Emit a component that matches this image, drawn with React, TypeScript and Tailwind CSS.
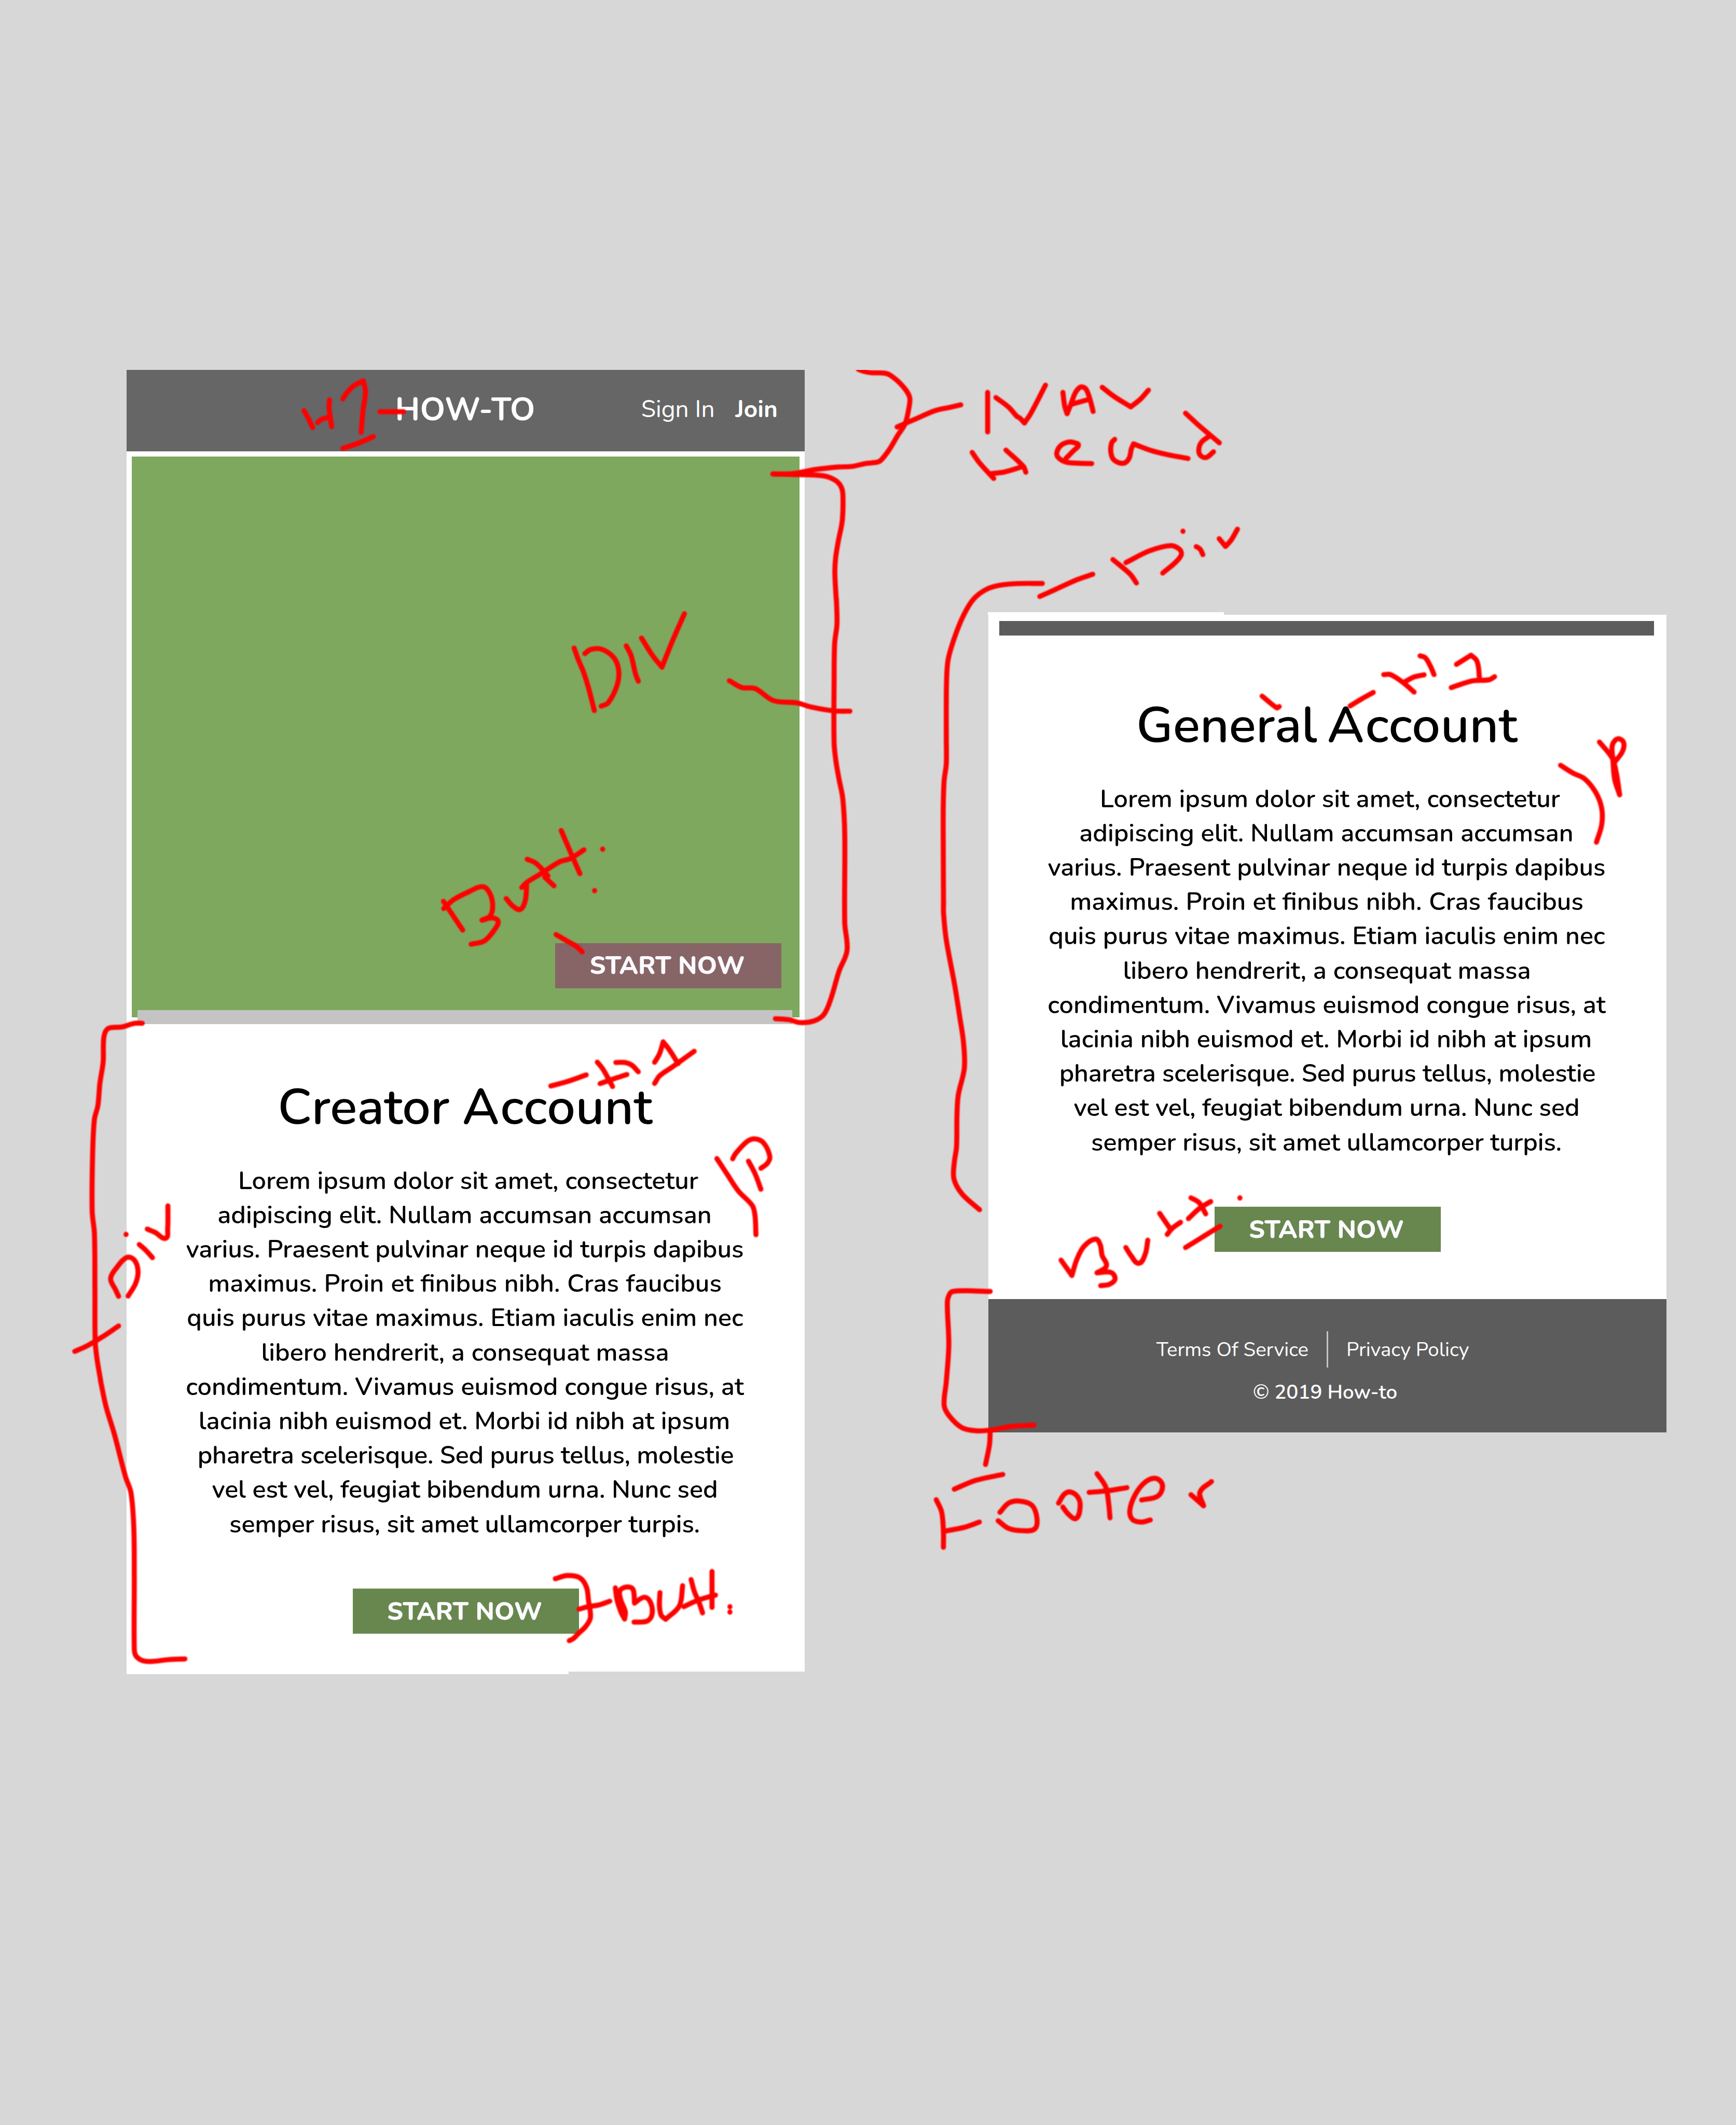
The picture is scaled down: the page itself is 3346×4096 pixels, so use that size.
type StrokeGroup = {
  origin: [number, number];
  scale: [number, number];
  strokes: string[];
};

const INTRO_LINES = [
  { text: 'Lorem ipsum dolor sit amet, consectetur', spacing: 'pl-[10px]' },
  { text: 'adipiscing elit. Nullam accumsan accumsan', spacing: 'pr-[4px]' },
  { text: 'varius. Praesent pulvinar neque id turpis dapibus', spacing: 'pr-[3px] tracking-[0.02px]' },
  { text: 'maximus. Proin et finibus nibh. Cras faucibus', spacing: 'pr-[3px] [word-spacing:0.6px]' },
  { text: 'quis purus vitae maximus. Etiam iaculis enim nec', spacing: 'pr-[2px]' },
  { text: 'libero hendrerit, a consequat massa', spacing: 'pr-[2px]' },
  { text: 'condimentum. Vivamus euismod congue risus, at', spacing: 'pr-[3px] tracking-[0.02px]' },
  { text: 'lacinia nibh euismod et. Morbi id nibh at ipsum', spacing: 'pr-[5px]' },
  { text: 'pharetra scelerisque. Sed purus tellus, molestie', spacing: 'tracking-[-0.27px]' },
  { text: 'vel est vel, feugiat bibendum urna. Nunc sed', spacing: 'pr-[3px] tracking-[-0.09px]' },
  { text: 'semper risus, sit amet ullamcorper turpis.', spacing: 'pr-[4px] tracking-[-0.15px]' },
];

// Pen strokes: every entry is a list of points that the pen passes through.
const PEN_GROUPS: StrokeGroup[] = [
  {
    // "H1" beside the site title
    origin: [600, 820],
    scale: [0.829, 0.3333],
    strokes: [
      '121,378 133,430 145,495',
      '192,303 191,360 198,488',
      '159,460 168,440 188,423',
      '229,297 240,255 260,205 286,172',
      '286,172 292,250 285,380 280,528',
      '332,385 398,385',
      '229,638 270,605 314,557',
    ],
  },
  {
    // header brace and "Nav Head"
    origin: [1900, 820],
    scale: [0.6378, 0.3571],
    strokes: [
      '122,86 142,99 170,108 215,110 238,125 280,190 307,265 303,350 290,440 265,510 235,600 205,670 190,685 150,693 100,712 50,716 -10,727 -50,737 -102,756 -140,761 -187,761',
      '-187,761 -110,765 -50,767 -5,773 20,785 45,810 60,845 66,890 64,1060 50,1190 40,1300 37,1400 42,1570',
      '262,458 330,405 400,352 450,332 492,315',
      '589,235 589,490',
      '619,268 665,330 695,390 705,400 722,432',
      '722,432 745,370 798,188',
      '861,235 867,320 876,372',
      '876,372 890,310 905,240 920,205 932,200 945,215 958,275 970,358',
      '895,310 948,283',
      '1003,202 1045,260 1106,328',
      '1106,328 1140,280 1170,220',
      '533,622 560,690 611,790',
      '655,607 718,712 727,750',
      '605,758 650,748 718,712',
      '872,660 900,610 917,575 900,558 880,556 855,575 840,615 842,650 870,683 920,692 965,694',
      '1048,538 1037,560 1034,620 1045,670 1080,692 1100,660 1108,600 1116,567',
      '1116,567 1180,610 1240,637 1313,661',
      '1304,369 1350,445 1426,560',
      '1390,517 1362,555 1352,600 1357,640 1378,655 1405,618',
    ],
  },
  {
    // hero brace, "DIV" and "Butt."
    origin: [980, 1380],
    scale: [0.6633, 0.6378],
    strokes: [
      '1428,0 1430,90 1422,160 1420,300 1420,520 1427,590 1437,650 1450,720 1457,850 1457,1170 1465,1270 1437,1345 1410,1440 1385,1500 1350,1524 1300,1530 1265,1520 1216,1516',
      '1056,295 1100,320 1145,323 1210,367 1290,375 1340,390 1420,404 1475,405',
      '517,177 530,215 550,265 568,325 587,403',
      '554,197 575,182 612,181 655,212 672,260 665,315 635,375 611,387',
      '698,169 715,205 730,270 740,297',
      '751,141 790,205 822,246',
      '822,246 855,160 900,53',
      '63,1092 130,1196',
      '64,1118 100,1085 150,1058 200,1039 225,1065 234,1110 225,1145 197,1160',
      '197,1160 235,1152 253,1165 240,1195 205,1235 159,1247',
      '281,1082 305,1110 330,1121 347,1090 352,1035',
      '335,1042 352,1024 405,990 465,950 505,937 551,906',
      '354,940 385,955 426,1000',
      '415,1005 447,1036',
      '472,836 490,880 515,940 537,992',
      '616,903 616,904',
      '588,1053 588,1054',
      '454,1212 495,1237 525,1255 545,1275',
    ],
  },
  {
    // left bracket and "Div"
    origin: [120, 2280],
    scale: [0.574, 0.574],
    strokes: [
      '362,135 330,135 280,150 225,156 208,190 205,290 192,375 184,465 170,520 163,650 161,890 170,980 172,1200 173,1410 180,1480 195,1570',
      '91,1452 140,1430 200,1395 267,1350',
      '267,1231 255,1205 235,1160 260,1115 300,1075 330,1085 345,1130 335,1180 305,1230',
      '297,982 297,983',
      '350,1023 375,1045 403,1076',
      '382,961 415,975 456,998 464,960 465,868',
    ],
  },
  {
    origin: [120, 3000],
    scale: [0.6378, 0.574],
    strokes: [
      '175,315 195,420 225,530 265,700 285,765 295,900 297,1100 297,1390 303,1420 330,1440 365,1442 420,1435 480,1432',
    ],
  },
  {
    // "H1" and "P" on the creator card
    origin: [1000, 2280],
    scale: [0.6378, 0.4464],
    strokes: [
      '422,497 480,475 550,440',
      '590,374 610,410 630,460 645,500',
      '600,485 645,462 697,438',
      '657,376 690,376 715,390 738,424',
      '797,375 815,330 828,270',
      '828,270 850,310 882,382',
      '797,484 815,445 860,400 940,318',
      '1022,872 1060,955 1100,1040 1150,1115 1160,1170 1163,1265',
      '1079,873 1090,845 1130,785 1158,770 1190,790 1213,860 1205,895 1181,922',
      '1136,885 1160,950 1181,1030',
    ],
  },
  {
    // brace and "Butt." beside the creator button
    origin: [1000, 3500],
    scale: [0.574, 0.3333],
    strokes: [
      '487,412 535,390 585,405 612,470 620,560 628,680 610,740 580,790 560,825 543,840',
      '582,622 620,605 665,592 706,567',
      '728,475 735,560 750,640 765,690',
      '765,690 768,640 750,560 745,500 760,475 785,470 800,490 805,580',
      '805,580 845,540 870,580 875,660 855,705 803,712',
      '907,508 905,600 912,665 930,692',
      '930,692 985,600 998,460',
      '1032,418 1045,500 1065,580 1078,648',
      '1116,362 1116,610',
      '1003,605 1060,560 1130,525',
      '1188,605 1188,606',
      '1188,642 1188,643',
    ],
  },
  {
    // "Div" and the bracket of the general card
    origin: [2100, 1180],
    scale: [0.6378, 0.574],
    strokes: [
      '728,190 790,248 813,284',
      '775,202 860,155 935,134 968,148 975,170 955,200 908,244',
      '981,76 981,77',
      '1029,138 1043,148 1053,170',
      '1112,106 1135,137',
      '1135,137 1155,112 1178,68',
      '464,338 520,310 600,270 655,249',
      '473,286 390,286 320,293 270,310 225,348 190,410 160,490 133,590 127,680 126,900 126,1010 118,1080 115,1200 116,1570',
      '1267,738 1320,785 1329,780',
    ],
  },
  {
    origin: [0, 0],
    scale: [1, 1],
    strokes: [
      '2174,2081 2174,2103 2180,2163 2200,2271 2212,2347 2220,2401 2222,2461 2208,2523 2205,2569 2204,2642 2199,2677 2198,2716 2217,2751 2257,2787',
    ],
  },
  {
    // "H1" and "P" on the general card
    origin: [3000, 1380],
    scale: [0.574, 0.4464],
    strokes: [
      '193,552 240,515 286,482',
      '328,390 355,390 405,430 450,480',
      '415,425 450,402 490,391',
      '474,293 495,303 515,345 530,390',
      '620,337 678,290',
      '678,290 700,315 708,350 712,405',
      '599,457 685,422 750,417 773,401',
      '1194,738 1245,820 1262,900 1275,1010',
      '1275,1010 1255,930 1248,830 1245,760 1258,728 1275,722 1292,745 1285,790 1256,840',
      '1038,858 1090,900 1135,928 1180,1000 1203,1080 1203,1165 1182,1255',
    ],
  },
  {
    // "Butt.", footer bracket and "Footer"
    origin: [2100, 2650],
    scale: [0.829, 0.6059],
    strokes: [
      '416,418 446,476',
      '446,476 460,415 480,365 512,338 525,360 530,400 542,440 516,466',
      '516,466 555,465 566,490 550,510 526,515',
      '596,370 610,400 632,430 650,395 657,342',
      '690,240 720,300',
      '711,320 725,297 748,274',
      '777,181 800,200 818,242',
      '770,260 800,222 832,195',
      '762,370 815,325 858,289',
      '913,181 913,182',
      '219,537 115,537 102,560 100,600 104,740 97,880 91,970 105,1010 140,1055 180,1067 220,1064 280,1050 341,1045',
      '219,1070 217,1120 206,1195',
      '119,1289 180,1255 254,1233',
      '69,1329 84,1375 89,1450 89,1510',
      '95,1448 150,1433 189,1414',
      '246,1377 270,1342 300,1334 335,1350 349,1400 343,1440 310,1447 270,1438 241,1409',
      '409,1342 425,1308 443,1300 463,1320 469,1355 458,1400 437,1385 421,1357',
      '516,1230 540,1280 548,1340 552,1398',
      '494,1301 545,1295 599,1283',
      '640,1330 685,1315 698,1275 680,1248 650,1262 622,1310 607,1370 615,1405 640,1414 664,1406',
      '777,1310 812,1352',
      '812,1352 802,1300 834,1260',
    ],
  },
];

// Turns a list of points into a smooth curve, with handles limited to the
// length of the segment that they belong to.
function smoothPath(points: string, origin: [number, number], scale: [number, number]) {
  const p = points.split(' ').map((pair) => {
    const [x, y] = pair.split(',').map(Number);
    return [origin[0] + x * scale[0], origin[1] + y * scale[1]];
  });
  let d = `M${p[0][0]} ${p[0][1]}`;
  for (let i = 0; i < p.length - 1; i++) {
    const a = p[i];
    const b = p[i + 1];
    const before = p[i - 1] ?? a;
    const after = p[i + 2] ?? b;
    const length = Math.hypot(b[0] - a[0], b[1] - a[1]);
    const spanA = Math.hypot(b[0] - before[0], b[1] - before[1]) || 1;
    const spanB = Math.hypot(after[0] - a[0], after[1] - a[1]) || 1;
    const h = length / 3;
    const c1 = [a[0] + ((b[0] - before[0]) / spanA) * h, a[1] + ((b[1] - before[1]) / spanA) * h];
    const c2 = [b[0] - ((after[0] - a[0]) / spanB) * h, b[1] - ((after[1] - a[1]) / spanB) * h];
    d += `C${c1[0].toFixed(1)} ${c1[1].toFixed(1)} ${c2[0].toFixed(1)} ${c2[1].toFixed(1)} ${b[0].toFixed(1)} ${b[1].toFixed(1)}`;
  }
  return d;
}

function PenNotes() {
  return (
    <svg
      viewBox="0 852 4000 4044"
      preserveAspectRatio="none"
      className="pointer-events-none absolute left-0 top-[713px] h-[3383px] w-[3346px] overflow-hidden"
      fill="none"
      stroke="#ff0000"
      strokeWidth={11.6}
      strokeLinecap="round"
      strokeLinejoin="round"
    >
      <filter id="pen-edge" filterUnits="userSpaceOnUse" x="0" y="800" width="4000" height="4096">
        <feGaussianBlur stdDeviation="1.1" />
      </filter>
      <g filter="url(#pen-edge)">
        {PEN_GROUPS.map((group) =>
          group.strokes.map((points) => (
            <path key={group.origin.join() + points} d={smoothPath(points, group.origin, group.scale)} />
          )),
        )}
      </g>
    </svg>
  );
}

function StartButton({ className }: { className: string }) {
  return (
    <button
      className={`flex h-[87px] w-[436px] items-center justify-center pr-[4px] text-[48.5px] font-extrabold leading-none text-[#fbfaff] ${className}`}
    >
      START NOW
    </button>
  );
}

function AccountIntro({ kind, gap }: { kind: string; gap: string }) {
  return (
    <div className="flex flex-col items-center">
      <h1 className="pr-[2px] text-[97px] font-semibold leading-[132px] text-black">
        {kind}
        <span className={gap}> </span>
        <span className="tracking-[2px]">A</span>
        <span className="tracking-[0.6px]">ccount</span>
      </h1>
      <p className="mt-[42.5px] text-center text-[48.5px] font-semibold leading-[66.22px] text-black">
        {INTRO_LINES.map((line) => (
          <span key={line.text} className={`block whitespace-nowrap ${line.spacing}`}>
            {line.text}
          </span>
        ))}
      </p>
      <StartButton className="mt-[91.5px] bg-[#68874f]" />
    </div>
  );
}

function HomeCard() {
  return (
    <div className="mt-[713px] ml-[244px] w-[1307px] shrink-0">
      <div className="h-[2509px] bg-white">
        <header className="grid h-[157px] grid-cols-[1fr_auto_1fr] items-center bg-[#666666] pb-[3px] text-white">
          <h1 className="relative -left-px col-start-2 text-[62px] font-bold leading-[86px]">HOW-TO</h1>
          <nav className="flex justify-end gap-[40px] pr-[52px] pb-[4px] text-[46px] leading-[63px]">
            <a>Sign In</a>
            <a className="font-bold">Join</a>
          </nav>
        </header>
        <section className="mx-[10px] mt-[10px] flex h-[1081px] items-end justify-end bg-[#7fa85f] pr-[35px] pb-[56px]">
          <StartButton className="bg-[#876567]" />
        </section>
        <div className="relative -mt-[14px] mr-[24px] ml-[21px] h-[27px] bg-[#c4c4c4]" />
        <section className="pt-[94px]">
          <AccountIntro kind="Creator" gap="tracking-[-1px]" />
        </section>
      </div>
      <div className="h-[5px] w-[852px] bg-white" />
    </div>
  );
}

function GeneralCard() {
  return (
    <div className="mt-[1180px] ml-[354px] w-[1307px] shrink-0">
      <div className="-ml-px h-[5px] w-[455px] bg-white" />
      <div className="flex h-[1319px] flex-col bg-white pt-[12px]">
        <div className="mr-[24px] ml-[21px] h-[28px] bg-[#5c5c5c]" />
        <section className="pt-[107px]">
          <AccountIntro kind="General" gap="tracking-[-6px]" />
        </section>
      </div>
      <footer className="h-[257px] bg-[#5c5c5c] pt-[62px] text-[38.4px] leading-[52px] text-white">
        <div className="grid grid-cols-[1fr_3px_1fr] items-center">
          <a className="pt-[2px] pr-[35px] text-right">Terms Of Service</a>
          <span className="h-[70px] bg-[#c4c4c4]" />
          <a className="pt-[2px] pl-[35px]">Privacy Policy</a>
        </div>
        <p className="mt-[22px] pr-[9px] text-center font-semibold">© 2019 How-to</p>
      </footer>
    </div>
  );
}

export default function App() {
  return (
    <main className="relative flex h-[4096px] w-[3346px] items-start overflow-hidden bg-[#d7d7d7] font-[Nunito,Lato,sans-serif]">
      <HomeCard />
      <GeneralCard />
      <PenNotes />
    </main>
  );
}
